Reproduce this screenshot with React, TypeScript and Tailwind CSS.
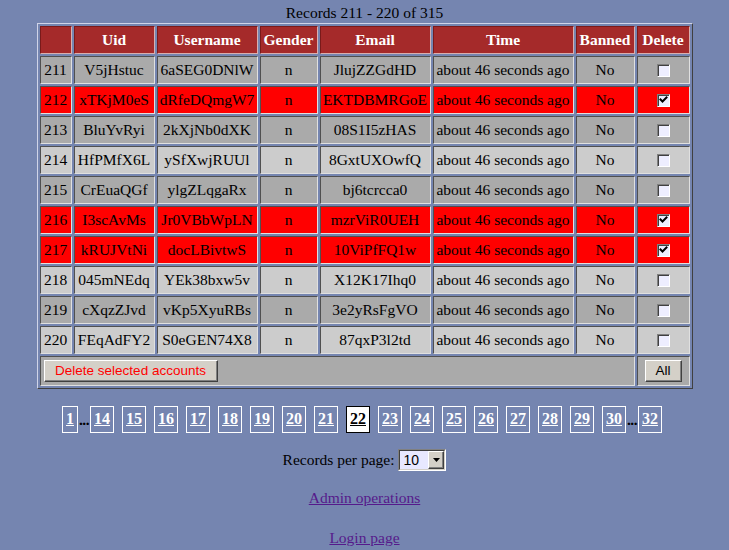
import React from 'react';

type Row = { id: number; uid: string; user: string; email: string; sel: boolean };

const rows: Row[] = [
  { id: 211, uid: 'V5jHstuc', user: '6aSEG0DNlW', email: 'JlujZZGdHD', sel: false },
  { id: 212, uid: 'xTKjM0eS', user: 'dRfeDQmgW7', email: 'EKTDBMRGoE', sel: true },
  { id: 213, uid: 'BluYvRyi', user: '2kXjNb0dXK', email: '08S1I5zHAS', sel: false },
  { id: 214, uid: 'HfPMfX6L', user: 'ySfXwjRUUl', email: '8GxtUXOwfQ', sel: false },
  { id: 215, uid: 'CrEuaQGf', user: 'ylgZLqgaRx', email: 'bj6tcrcca0', sel: false },
  { id: 216, uid: 'I3scAvMs', user: 'Jr0VBbWpLN', email: 'mzrViR0UEH', sel: true },
  { id: 217, uid: 'kRUJVtNi', user: 'docLBivtwS', email: '10ViPfFQ1w', sel: true },
  { id: 218, uid: '045mNEdq', user: 'YEk38bxw5v', email: 'X12K17Ihq0', sel: false },
  { id: 219, uid: 'cXqzZJvd', user: 'vKp5XyuRBs', email: '3e2yRsFgVO', sel: false },
  { id: 220, uid: 'FEqAdFY2', user: 'S0eGEN74X8', email: '87qxP3l2td', sel: false },
];

const cell =
  'border border-t-[#505050] border-l-[#505050] border-b-[#e0e0e0] border-r-[#e0e0e0] px-[1px] py-[4px] leading-[18px] text-center whitespace-nowrap overflow-hidden';

const head =
  'border border-t-[#7a1a1a] border-l-[#7a1a1a] border-b-[#d8b0b0] border-r-[#d8b0b0] px-0 py-[4px] leading-[18px] text-center whitespace-nowrap bg-[#a52a2a] text-white font-bold';

function Checkbox({ checked }: { checked: boolean }) {
  return (
    <div className="flex justify-center items-center h-[18px]">
      <span className="relative block w-[13px] h-[13px] bg-[#eeeeff] border border-t-[#808080] border-l-[#808080] border-b-white border-r-white shadow-[inset_1px_1px_0_#404040]">
        {checked && (
          <svg className="absolute left-0 top-0" width="11" height="11" viewBox="0 0 11 11">
            <path d="M2.5 4.5 L4.5 6.5 L8.5 2.5" stroke="#000" strokeWidth="2" fill="none" strokeLinecap="square" />
          </svg>
        )}
      </span>
    </div>
  );
}

type PageItem = number | 'dots';
const pages: PageItem[] = [1, 'dots', 14, 15, 16, 17, 18, 19, 20, 21, 22, 23, 24, 25, 26, 27, 28, 29, 30, 'dots', 32];

export default function App() {
  return (
    <div className="min-h-[550px] w-full bg-[#7585b0] font-['Liberation_Serif','Times_New_Roman',serif] text-[15.5px] text-black">
      <div className="h-[23px] pt-[4px] leading-[18px] text-center">Records 211 - 220 of 315</div>
      <table className="mx-auto table-fixed w-[656px] border-separate border-spacing-[2px] border border-t-[#d0d4e8] border-l-[#d0d4e8] border-b-[#404040] border-r-[#404040]">
        <thead>
          <tr>
            <th className={`${head} w-[32px]`}></th>
            <th className={`${head} w-[81px]`}>Uid</th>
            <th className={`${head} w-[101px]`}>Username</th>
            <th className={`${head} w-[58px]`}>Gender</th>
            <th className={`${head} w-[111px]`}>Email</th>
            <th className={`${head} w-[141px]`}>Time</th>
            <th className={`${head} w-[59px]`}>Banned</th>
            <th className={`${head} w-[53px]`}>Delete</th>
          </tr>
        </thead>
        <tbody>
          {rows.map((r, i) => {
            const bg = r.sel ? 'bg-[#ff0000]' : i % 2 === 0 ? 'bg-[#aaaaaa]' : 'bg-[#cccccc]';
            return (
              <tr key={r.id} className={bg}>
                <td className={cell}>{r.id}</td>
                <td className={cell}>{r.uid}</td>
                <td className={cell}>{r.user}</td>
                <td className={cell}>n</td>
                <td className={cell}>{r.email}</td>
                <td className={cell}>about 46 seconds ago</td>
                <td className={cell}>No</td>
                <td className={cell}>
                  <Checkbox checked={r.sel} />
                </td>
              </tr>
            );
          })}
          <tr className="bg-[#aaaaaa]">
            <td
              colSpan={7}
              className="border border-t-[#505050] border-l-[#505050] border-b-[#e0e0e0] border-r-[#e0e0e0] px-[3px] py-[3px] text-left"
            >
              <button className="block h-[22px] w-[174px] bg-[#d4d0c8] text-[#ff0000] font-['Liberation_Sans',Arial,sans-serif] text-[13.5px] leading-[16px] border border-t-white border-l-white border-b-[#404040] border-r-[#404040] shadow-[inset_-1px_-1px_0_#808080] text-center">
                Delete selected accounts
              </button>
            </td>
            <td className="border border-t-[#505050] border-l-[#505050] border-b-[#e0e0e0] border-r-[#e0e0e0] px-0 py-[3px]">
              <div className="flex justify-center">
                <button className="block h-[22px] w-[37px] bg-[#d4d0c8] text-black font-['Liberation_Sans',Arial,sans-serif] text-[13.5px] leading-[16px] border border-t-white border-l-white border-b-[#404040] border-r-[#404040] shadow-[inset_-1px_-1px_0_#808080] text-center">
                  All
                </button>
              </div>
            </td>
          </tr>
        </tbody>
      </table>

      <div className="mt-[17px] flex justify-center items-center pr-[5px]">
        {pages.map((p, i) => {
          const prev = i > 0 ? pages[i - 1] : null;
          if (p === 'dots') {
            return (
              <span key={i} className="font-bold leading-[18px] w-[12px] text-center tracking-[-0.5px]">
                ...
              </span>
            );
          }
          const ml = prev !== null && prev !== 'dots' ? 'ml-[8px]' : '';
          const current = p === 22;
          return (
            <a
              key={i}
              href="#"
              className={`${ml} block border px-[3px] pt-[3px] pb-[4px] leading-[18px] text-[16px] font-bold underline ${
                current ? 'bg-white border-black text-black' : 'border-white text-white'
              }`}
            >
              {p}
            </a>
          );
        })}
      </div>

      <div className="mt-[16px] flex justify-center items-center gap-[4px] h-[22px]">
        <span className="leading-[18px]">Records per page:</span>
        <div className="flex w-[48px] h-[22px] border border-t-[#808080] border-l-[#808080] border-b-white border-r-white">
          <div className="flex flex-1 border border-t-[#404040] border-l-[#404040] border-b-[#d4d0c8] border-r-[#d4d0c8] bg-[#e8e8ff]">
            <span className="flex-1 pl-[3px] font-['Liberation_Sans',Arial,sans-serif] text-[14px] leading-[18px]">10</span>
            <span className="flex items-center justify-center w-[16px] h-[18px] bg-[#d4d0c8] border border-t-white border-l-white border-b-[#404040] border-r-[#404040] shadow-[inset_-1px_-1px_0_#808080]">
              <svg width="7" height="4" viewBox="0 0 7 4">
                <path d="M0 0 H7 L3.5 4 Z" fill="#000" />
              </svg>
            </span>
          </div>
        </div>
      </div>

      <div className="mt-[18px] leading-[18px] text-center">
        <a href="#" className="underline text-[#551a8b]">
          Admin operations
        </a>
      </div>
      <div className="mt-[22px] leading-[18px] text-center">
        <a href="#" className="underline text-[#551a8b]">
          Login page
        </a>
      </div>
    </div>
  );
}
